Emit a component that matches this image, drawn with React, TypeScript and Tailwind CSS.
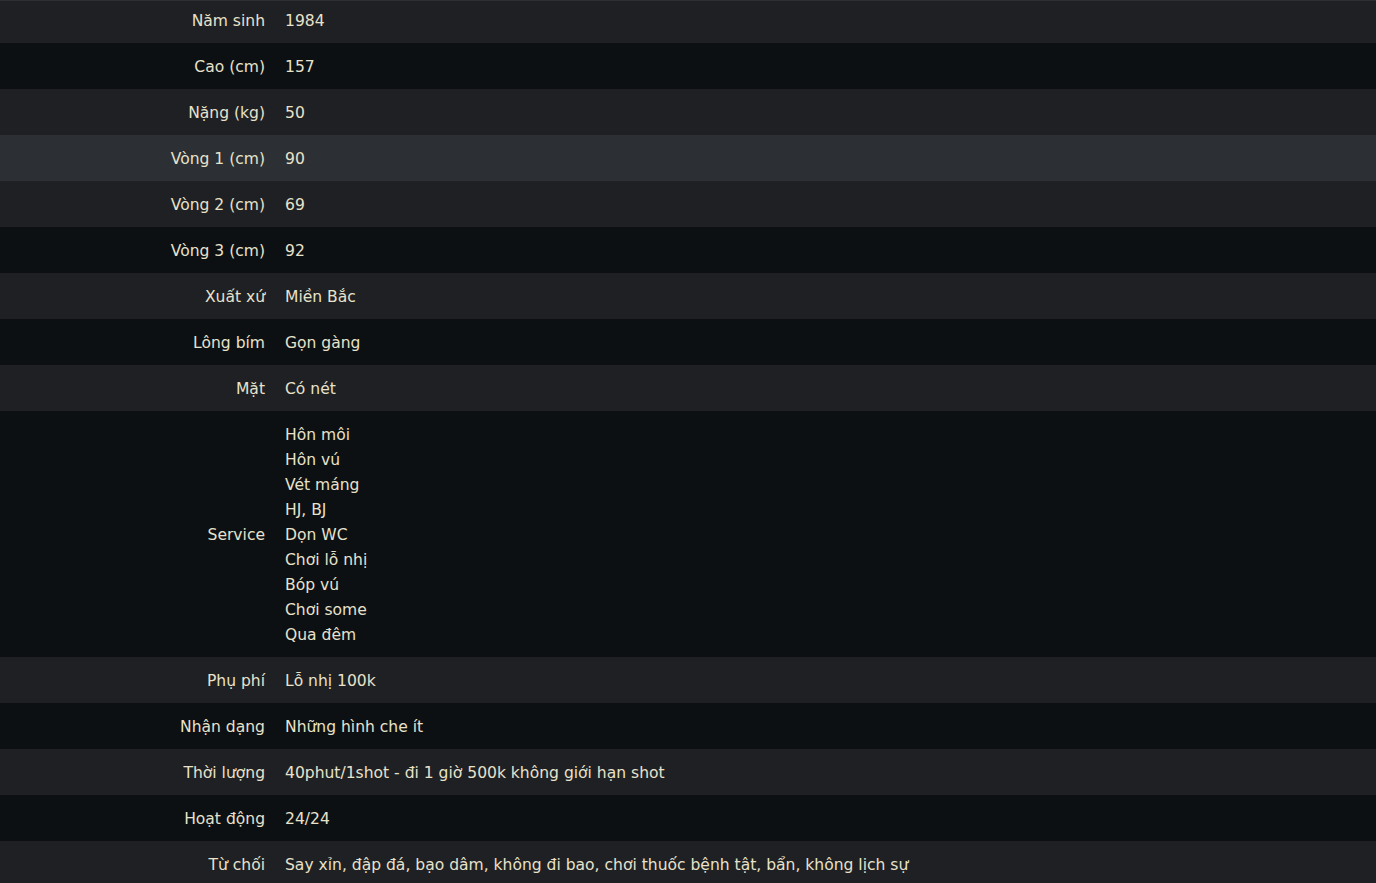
import React from "react";

const rows: { label: string; value: string[]; hover?: boolean }[] = [
  { label: "Năm sinh", value: ["1984"] },
  { label: "Cao (cm)", value: ["157"] },
  { label: "Nặng (kg)", value: ["50"] },
  { label: "Vòng 1 (cm)", value: ["90"], hover: true },
  { label: "Vòng 2 (cm)", value: ["69"] },
  { label: "Vòng 3 (cm)", value: ["92"] },
  { label: "Xuất xứ", value: ["Miền Bắc"] },
  { label: "Lông bím", value: ["Gọn gàng"] },
  { label: "Mặt", value: ["Có nét"] },
  {
    label: "Service",
    value: [
      "Hôn môi",
      "Hôn vú",
      "Vét máng",
      "HJ, BJ",
      "Dọn WC",
      "Chơi lỗ nhị",
      "Bóp vú",
      "Chơi some",
      "Qua đêm",
    ],
  },
  { label: "Phụ phí", value: ["Lỗ nhị 100k"] },
  { label: "Nhận dạng", value: ["Những hình che ít"] },
  { label: "Thời lượng", value: ["40phut/1shot - đi 1 giờ 500k không giới hạn shot"] },
  { label: "Hoạt động", value: ["24/24"] },
  { label: "Từ chối", value: ["Say xỉn, đập đá, bạo dâm, không đi bao, chơi thuốc bệnh tật, bẩn, không lịch sự"] },
];

export default function App() {
  return (
    <div
      className="min-h-screen w-full bg-[#1e2024] border-t border-[#2b2e33] text-[#e8e2cb] text-[15.55px] leading-[25px]"
      style={{ fontFamily: '"DejaVu Sans", Verdana, sans-serif' }}
    >
      {rows.map((r, i) => (
        <div
          key={r.label}
          className={`flex items-center ${i === 0 ? "pt-[8px]" : "pt-[12px]"} pb-[9px] ${
            r.hover ? "bg-[#2c3034]" : i % 2 === 1 ? "bg-[#0c1013]" : "bg-[#1e2024]"
          }`}
        >
          <div className="w-[275px] shrink-0 pr-[10px] text-right">{r.label}</div>
          <div className="pl-[10px] flex flex-col">
            {r.value.map((v) => (
              <div key={v}>{v}</div>
            ))}
          </div>
        </div>
      ))}
    </div>
  );
}
